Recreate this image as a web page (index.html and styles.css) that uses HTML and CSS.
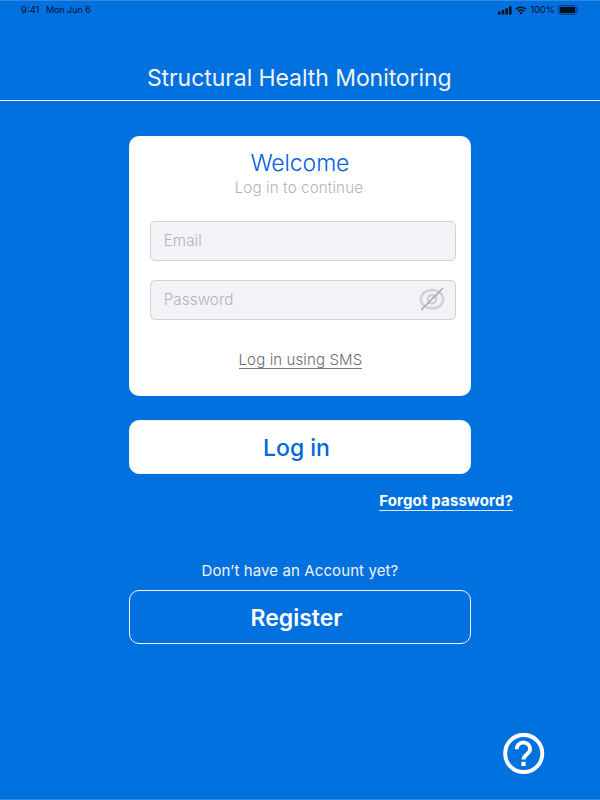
FILE: index.html
```
<!DOCTYPE html>
<html lang="en">
<head>
<meta charset="utf-8">
<title>Structural Health Monitoring</title>
<link rel="stylesheet" href="styles.css">
</head>
<body>
<div class="screen">
  <div class="status">
    <span class="time">9:41</span>
    <span class="date">Mon Jun 6</span>
    <svg class="signal" width="14" height="9" viewBox="0 0 14 9"><rect x="0" y="5.5" width="2.6" height="3" rx=".6"/><rect x="3.7" y="4" width="2.6" height="4.5" rx=".6"/><rect x="7.4" y="2.2" width="2.6" height="6.3" rx=".6"/><rect x="11" y="0.3" width="2.6" height="8.2" rx=".6"/></svg>
    <svg class="wifi" width="12" height="9" viewBox="0 0 12 9" fill="none" stroke="#06101f" stroke-width="1.5"><path d="M.8 3.3a7.4 7.4 0 0 1 10.4 0M2.8 5.4a4.5 4.5 0 0 1 6.4 0"/><path d="M4.3 6.8a2.5 2.5 0 0 1 3.4 0L6 8.5z" fill="#06101f" stroke="none"/></svg>
    <span class="percent">100%</span>
    <svg class="battery" width="21" height="10" viewBox="0 0 21 10"><rect x=".5" y=".5" width="18" height="9" rx="2.5" fill="none" stroke="#06448c"/><rect x="1.7" y="1.7" width="15.6" height="6.6" rx="1.3"/><path d="M19.5 3.5q1.2 .4 1.2 1.5t-1.2 1.5z" fill="#06448c"/></svg>
  </div>
  <header class="header"><h1>Structural Health Monitoring</h1></header>
  <main class="main">
    <section class="card">
      <h2>Welcome</h2>
      <p class="sub">Log in to continue</p>
      <div class="field">Email</div>
      <div class="field">Password
        <svg width="26" height="24" viewBox="0 0 26 24" fill="none"><ellipse cx="13" cy="12.2" rx="11.2" ry="9.2" stroke="#d1d1d4" stroke-width="2.5"/><circle cx="13" cy="12.2" r="4.2" stroke="#d1d1d4" stroke-width="2.5"/><path d="M2.7 22.5 23.5 1.5" stroke="#aaaaae" stroke-width="1.7" stroke-linecap="round"/></svg>
      </div>
      <a class="sms">Log in using SMS</a>
    </section>
    <div class="button login">Log in</div>
    <a class="forgot">Forgot password?</a>
    <p class="question">Don’t have an Account yet?</p>
    <div class="button register">Register</div>
  </main>
  <footer class="footer">
    <svg width="42" height="42" viewBox="0 0 42 42" fill="none" stroke="#fff"><circle cx="20.7" cy="20.5" r="18.6" stroke-width="4"/><path d="M13.7 16.2a6.7 6.7 0 1 1 13.4 0c0 4.9-6.6 5.1-6.6 10.4" stroke-width="3.8"/><path d="M20.5 28.8v4.2" stroke-width="4.2"/></svg>
  </footer>
</div>
</body>
</html>
```
FILE: styles.css
```
* { box-sizing: border-box; }
body { margin: 0; font-family: Inter, "Liberation Sans", sans-serif; }
h1, h2, p { margin: 0; font-weight: 400; }
svg { display: block; flex: none; }
.screen {
  width: 600px;
  height: 800px;
  background: #0071de;
  border-top: 1px solid #3389de;
  border-bottom: 1px solid #3389de;
  display: flex;
  flex-direction: column;
}
.status {
  height: 18px;
  flex: none;
  display: flex;
  align-items: center;
  padding: 0 21px;
  font-size: 9px;
  line-height: 18px;
  color: #06101f;
  fill: #06101f;
}
.time { font-size: 9.5px; }
.date { margin-left: 6.5px; letter-spacing: -0.06px; }
.signal { margin-left: auto; }
.wifi { margin-left: 3px; }
.percent { margin-left: 3px; font-size: 9.4px; }
.battery { margin-left: 3px; }
.header {
  height: 82px;
  flex: none;
  border-bottom: 1px solid #fff;
  padding: 44px 1.5px 0 0;
  text-align: center;
  color: #f2f2f7;
}
.header h1 { font-size: 23px; line-height: 30px; letter-spacing: -0.07px; }
.main {
  width: 341.3px;
  margin: 35px 0 0 129.3px;
  display: flex;
  flex-direction: column;
}
.card {
  height: 260px;
  background: #fff;
  border-radius: 10px;
  padding: 12px 14.5px 0 20.4px;
  display: flex;
  flex-direction: column;
}
.card h2 { margin-right: 6px; font-size: 23px; line-height: 30px; font-weight: 300; letter-spacing: -0.1px; text-align: center; color: #0062de; }
.sub { margin-right: 8px; font-size: 15.2px; line-height: 20px; font-weight: 350; letter-spacing: 0.1px; text-align: center; color: #b4b4b7; margin-bottom: 23px; }
.field {
  height: 40px;
  margin-bottom: 19px;
  background: #f2f2f7;
  border: 1px solid #d1d1d6;
  border-radius: 5px;
  display: flex;
  align-items: center;
  justify-content: space-between;
  padding: 0 10.5px 1px 13px;
  font-size: 15.2px;
  font-weight: 350;
  letter-spacing: 0.1px;
  color: #b4b4b7;
}
.field svg { margin-top: -1px; }
.sms {
  align-self: center;
  margin: 11px 5px 0 0;
  font-size: 15px;
  line-height: 19px;
  font-weight: 300;
  letter-spacing: 0.12px;
  color: #6c6c70;
  border-bottom: 1px solid #7c7c80;
  height: 19px;
}
.button {
  height: 54px;
  border: 1px solid #f2f2f7;
  border-radius: 10px;
  display: flex;
  align-items: center;
  justify-content: center;
  font-size: 23px;
}
.login { margin-top: 24px; background: #fff; color: #0068d9; font-weight: 500; padding: 1px 7px 0 0; }
.forgot {
  align-self: flex-end;
  margin: 17px -42.5px 0 0;
  font-size: 15px;
  height: 20px;
  line-height: 20px;
  font-weight: 700;
  letter-spacing: 0.15px;
  color: #fff;
  border-bottom: 1px solid #e5e5fa;
}
.question { margin-top: 50px; font-size: 15px; line-height: 20px; letter-spacing: 0.1px; text-align: center; color: #f2f2f7; }
.register { margin-top: 9px; color: #fff; font-weight: 600; padding: 1px 7px 0 0; }
.footer { margin: auto 55.5px 24.5px auto; }
```
